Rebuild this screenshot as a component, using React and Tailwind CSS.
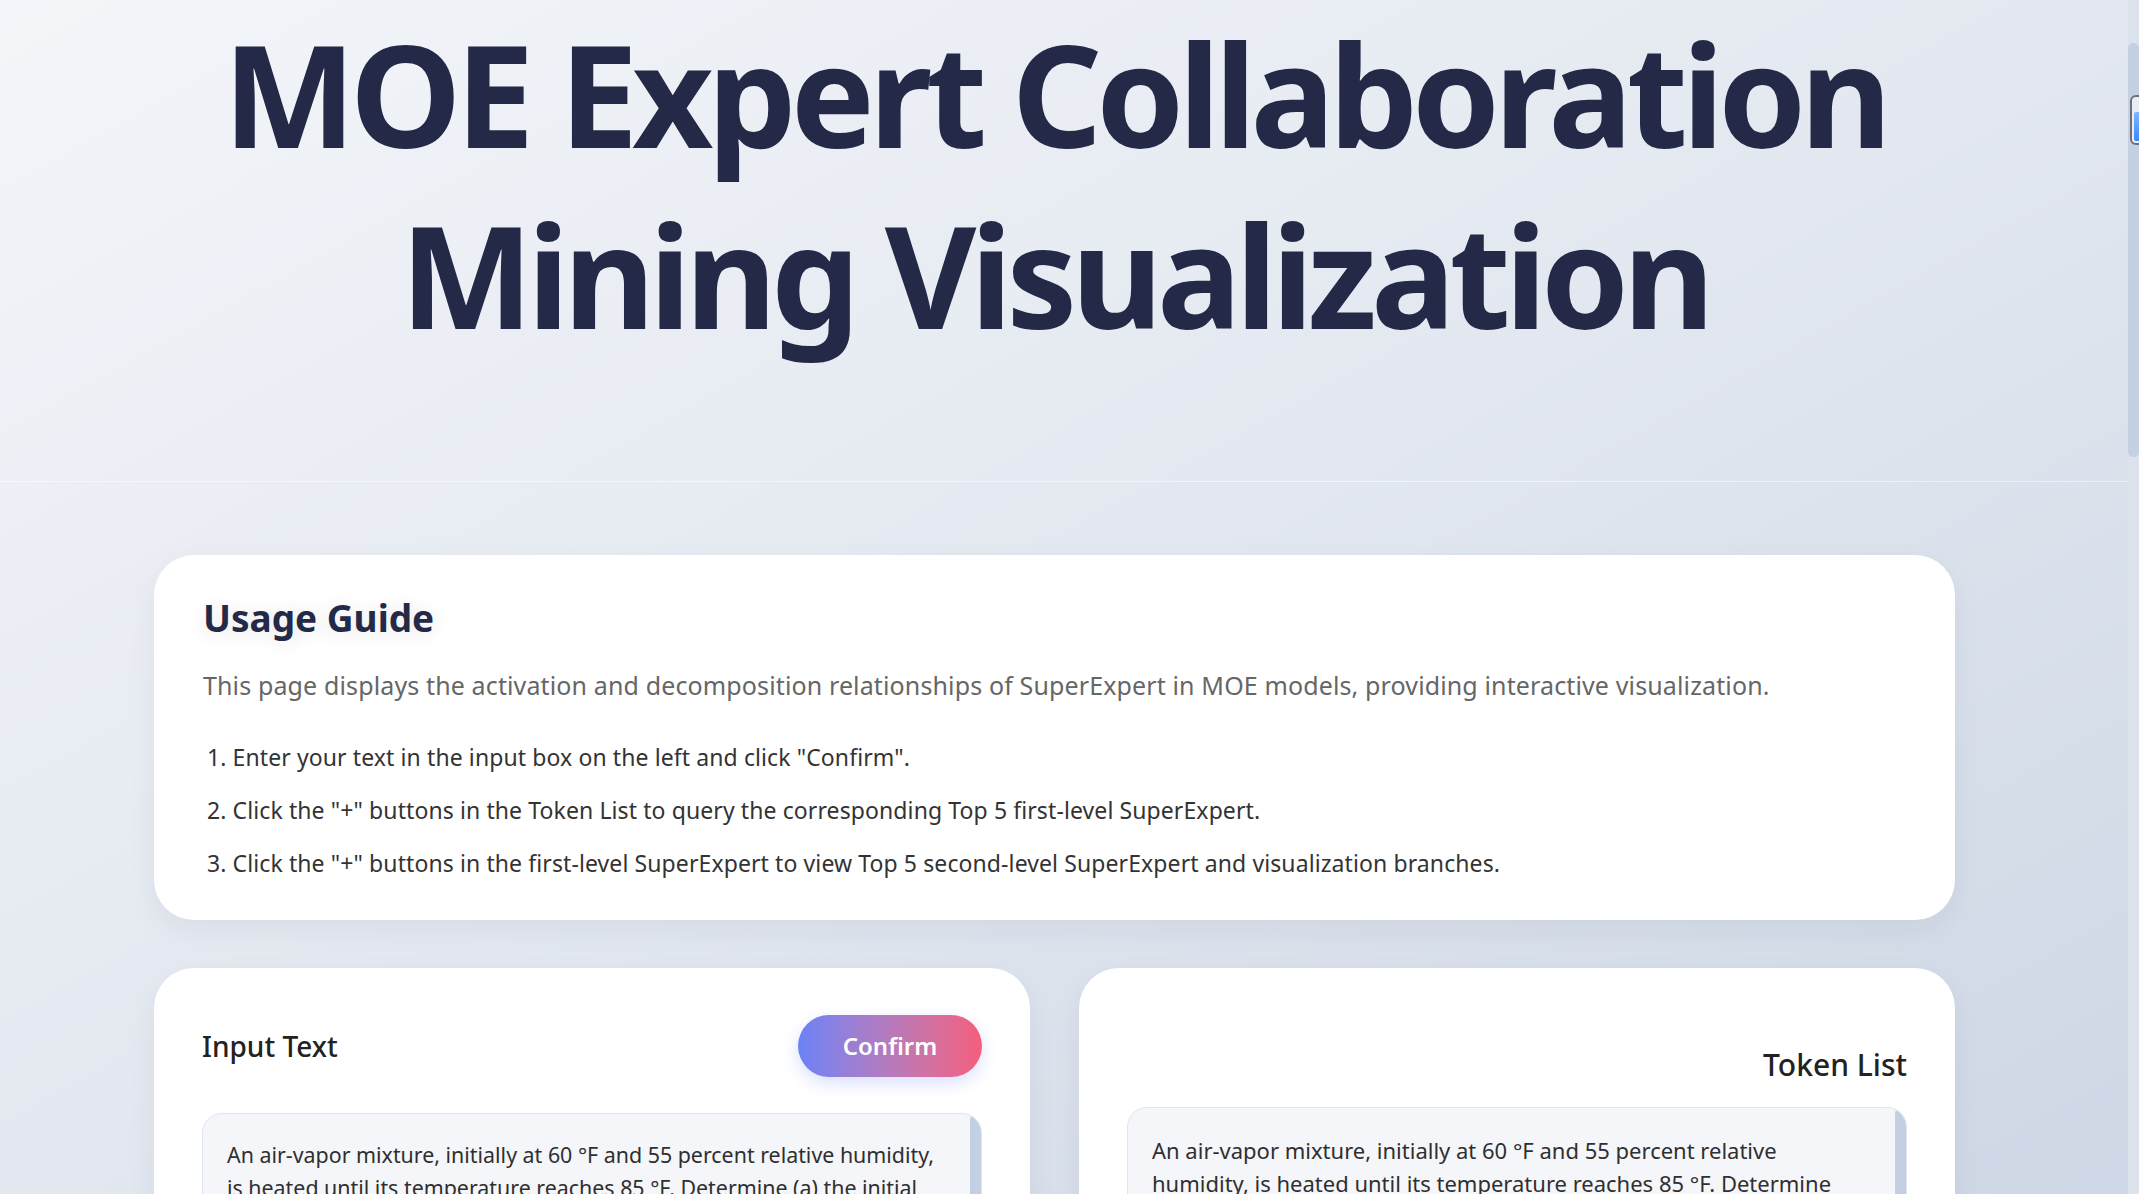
export default function App() {
  const sample =
    "An air-vapor mixture, initially at 60 °F and 55 percent relative humidity, is heated until its temperature reaches 85 °F. Determine (a) the initial and final specific humidities, (b) the final relative humidity, and (c) the heat transfer per pound of dry air.";
  return (
    <div className="relative flex h-[1194px] w-full overflow-hidden bg-linear-to-br from-[#f3f5f9] via-[#e3e8f0] to-[#cdd7e5] font-['Noto_Sans',sans-serif]">
      <main className="flex min-w-0 flex-1 flex-col">
        <header className="h-[482px] shrink-0 border-b border-white/50 pt-[3px] pl-[154px] pr-[173px]">
          <h1 className="text-center text-[141px] leading-[181px] font-bold tracking-[-6px] text-[#232946]">
            MOE Expert Collaboration
            <br />
            Mining Visualization
          </h1>
        </header>

        <div className="flex flex-col gap-[48px] pt-[73px] pl-[154px] pr-[173px]">
          <section className="rounded-[40px] bg-white px-[49px] pt-[42px] pb-[30px] shadow-[0_10px_30px_rgba(35,41,70,0.06)]">
            <h2 className="text-[37px] leading-[42px] font-bold text-[#232946] [text-shadow:0_2px_20px_rgba(35,41,70,0.12)]">
              Usage Guide
            </h2>
            <p className="mt-[28px] text-[25px] leading-[36px] tracking-[0.13px] text-[#666666]">
              This page displays the activation and decomposition relationships of SuperExpert in MOE models, providing interactive visualization.
            </p>
            <ol className="mt-[28px] pl-[4px] text-[23px] leading-[53px] tracking-[0.1px] text-[#333333]">
              <li>1. Enter your text in the input box on the left and click "Confirm".</li>
              <li>2. Click the "+" buttons in the Token List to query the corresponding Top 5 first-level SuperExpert.</li>
              <li>3. Click the "+" buttons in the first-level SuperExpert to view Top 5 second-level SuperExpert and visualization branches.</li>
            </ol>
          </section>

          <div className="grid grid-cols-2 gap-[49px]">
            <section className="h-[600px] rounded-[40px] bg-white px-[48px] pt-[47px] shadow-[0_10px_30px_rgba(35,41,70,0.06)]">
              <div className="flex h-[62px] items-center justify-between">
                <h3 className="text-[28px] leading-[36px] font-medium text-[#222222]">Input Text</h3>
                <button className="h-[62px] w-[184px] rounded-full bg-linear-to-r from-[#6a82f6] to-[#f55d7c] text-[24px] font-semibold text-white shadow-[0_6px_16px_rgba(106,130,246,0.25)]">
                  Confirm
                </button>
              </div>
              <div className="mt-[36px] flex h-[400px] overflow-hidden rounded-[20px] border border-[#dfe5ee] bg-[#f5f6fa]">
                <p className="flex-1 pt-[24px] pl-[24px] pr-[20px] text-[21.4px] leading-[33px] text-[#2f2f2f]">
                  {sample}
                </p>
                <div className="h-[600px] w-[11px] shrink-0 rounded-full bg-[#c3cfe2]" />
              </div>
            </section>

            <section className="h-[600px] rounded-[40px] bg-white px-[48px] pt-[47px] shadow-[0_10px_30px_rgba(35,41,70,0.06)]">
              <div className="flex h-[62px] items-end justify-end">
                <h3 className="translate-y-[6px] text-[30px] leading-[36px] font-medium text-[#222222]">Token List</h3>
              </div>
              <div className="mt-[30px] flex h-[400px] overflow-hidden rounded-[20px] border border-[#dfe5ee] bg-[#f5f6fa]">
                <p className="flex-1 pt-[26px] pl-[24px] pr-[60px] text-[22px] leading-[33px] text-[#2f2f2f]">
                  {sample}
                </p>
                <div className="h-[600px] w-[11px] shrink-0 rounded-full bg-[#c3cfe2]" />
              </div>
            </section>
          </div>
        </div>
      </main>

      <div className="flex w-[11px] shrink-0 flex-col bg-[#dde3ec] pt-[43px]">
        <div className="h-[414px] w-full rounded-full bg-[#c5d0e2]" />
      </div>

      <div className="absolute top-[95px] left-[2130px] h-[50px] w-[20px] rounded-[6px] border-2 border-[#707070] bg-[#e8edf5] p-[2px] pt-[15px]">
        <div className="h-full w-full rounded-[2px] bg-linear-to-b from-[#7fb6ff] to-[#3a86ff]" />
      </div>
    </div>
  );
}
